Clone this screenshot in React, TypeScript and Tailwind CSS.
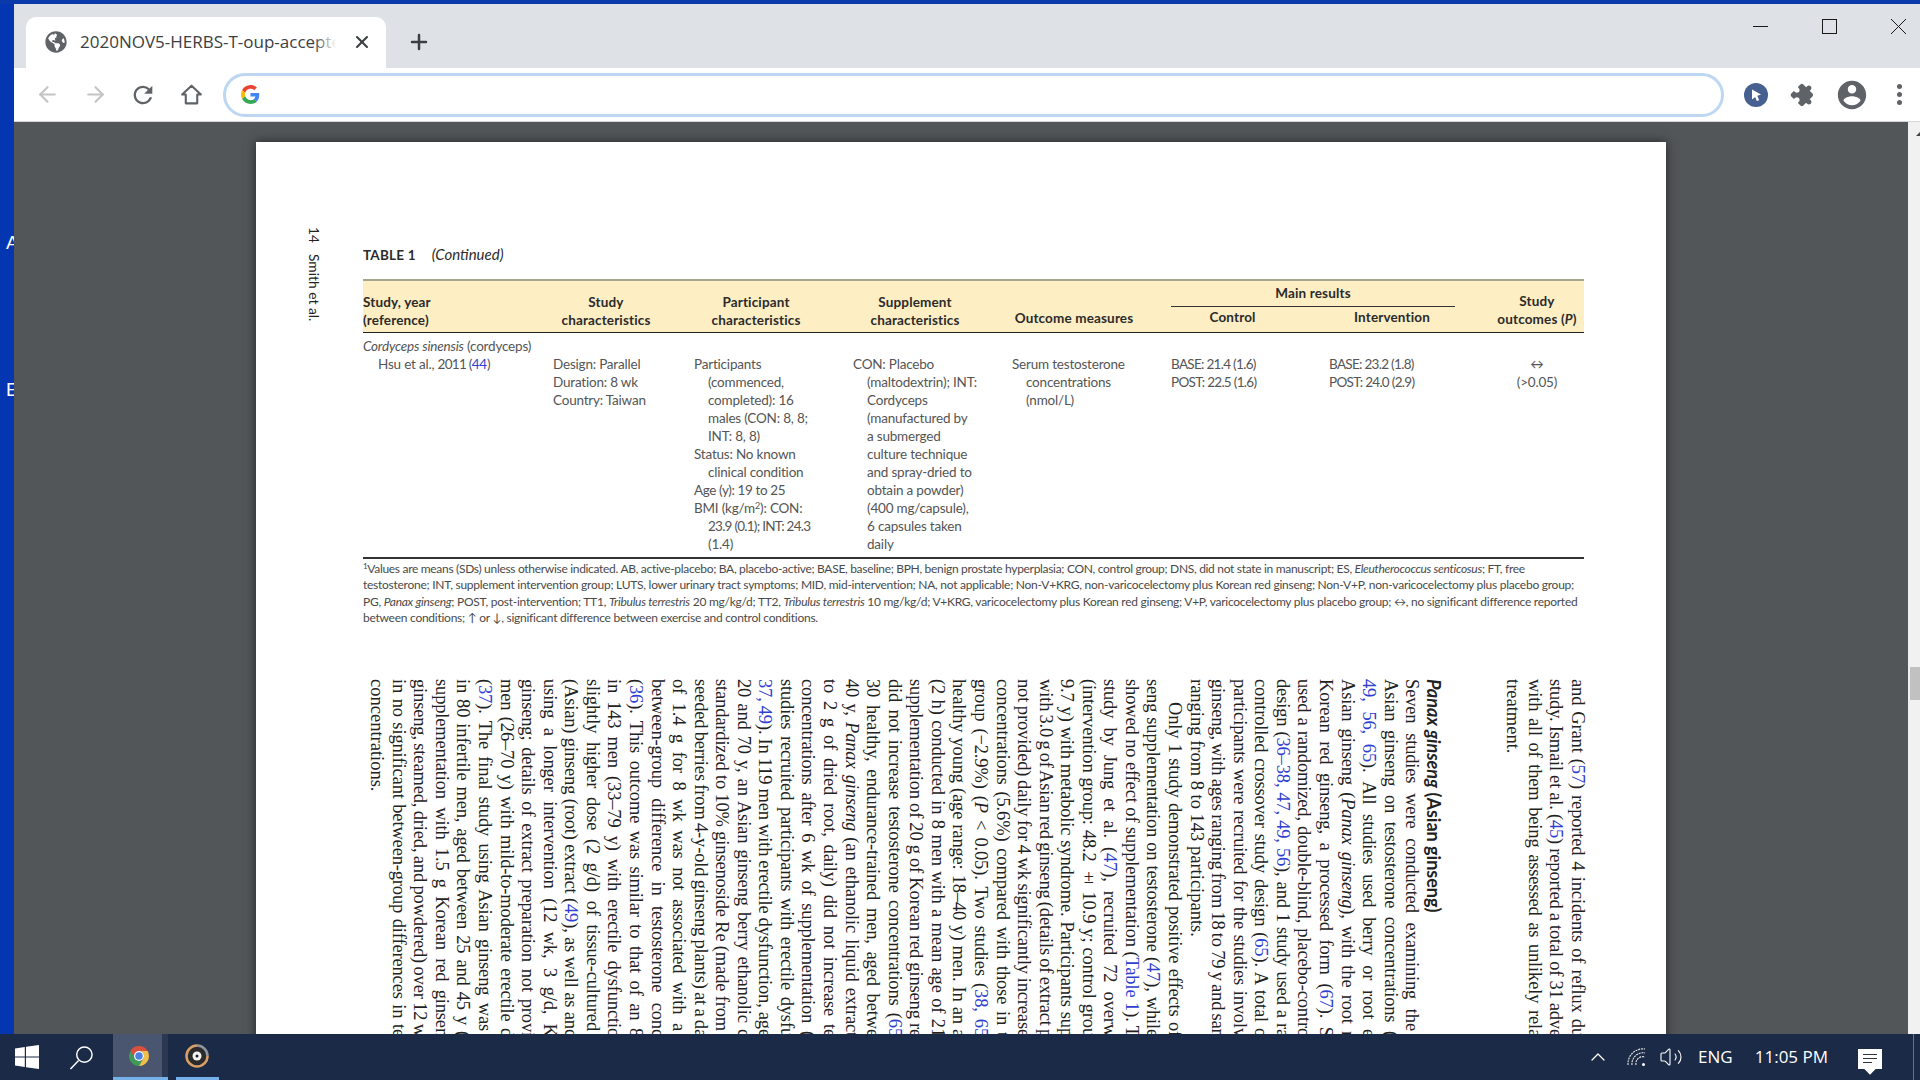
import type { ReactNode } from "react";
import { ArrowLeft, ArrowRight, Plus, X, ChevronUp, Volume2 } from "lucide-react";
import { FaGlobeAmericas } from "react-icons/fa";

function R({ children }: { children: ReactNode }) {
  return <span className="text-[#2f3fd0]">{children}</span>;
}

function I({ children }: { children: ReactNode }) {
  return <span className="italic">{children}</span>;
}

// lines that stop a little short of the fold
function Pad() {
  return <span className="inline-block h-[6px]" />;
}

function GoogleLogo() {
  return (
    <svg viewBox="0 0 48 48" className="h-[19px] w-[19px]">
      <path fill="#EA4335" d="M24 9.5c3.5 0 6.7 1.2 9.2 3.6l6.9-6.9C35.9 2.4 30.4 0 24 0 14.6 0 6.5 5.4 2.6 13.2l8 6.2C12.500 13.700 17.800 9.500 24 9.500z" />
      <path fill="#4285F4" d="M46.100 24.500c0-1.600-.100-3.100-.400-4.500H24v9h12.400c-.500 2.900-2.200 5.400-4.600 7l7.700 6c4.500-4.200 6.600-10.300 6.600-17.500z" />
      <path fill="#FBBC05" d="M10.600 28.600c-.500-1.400-.800-3-.800-4.600s.300-3.200.800-4.600l-8-6.200C.900 16.500 0 20.100 0 24s.900 7.500 2.600 10.800l8-6.200z" />
      <path fill="#34A853" d="M24 48c6.500 0 11.900-2.100 15.900-5.800l-7.700-6c-2.200 1.400-4.900 2.300-8.200 2.300-6.200 0-11.500-4.200-13.400-9.900l-8 6.200C6.500 42.600 14.600 48 24 48z" />
    </svg>
  );
}

function ChromeLogo() {
  return (
    <svg viewBox="0 0 48 48" className="h-[24px] w-[24px]">
      <path fill="#d9503f" d="M24 4A20 20 0 0 1 41.320 14L24 14A10 10 0 0 0 15.340 29L6.680 14A20 20 0 0 1 24 4Z" />
      <path fill="#3f9c58" d="M6.680 14A20 20 0 0 0 24 44L32.660 29A10 10 0 0 1 15.340 29Z" />
      <path fill="#f2c04a" d="M41.320 14A20 20 0 0 1 24 44L32.660 29A10 10 0 0 0 24 14Z" />
      <circle cx="24" cy="24" r="10" fill="#fff" />
      <circle cx="24" cy="24" r="7.500" fill="#4d83e0" />
    </svg>
  );
}

function DiscIcon() {
  return (
    <svg viewBox="0 0 26 26" className="h-[26px] w-[26px]">
      <circle cx="13" cy="13" r="12" fill="#2b2b2b" />
      <path d="M13 2.500A10.500 10.500 0 1 0 23.500 13" fill="none" stroke="#d7a06b" strokeWidth="2.500" />
      <path d="M13 2.500A10.500 10.500 0 0 1 23.500 13" fill="none" stroke="#8f96a3" strokeWidth="2.500" />
      <circle cx="13" cy="13" r="4.500" fill="#f4f4f4" />
      <circle cx="13" cy="13" r="1.500" fill="#222" />
    </svg>
  );
}

function BrowserTabs() {
  return (
    <div className="flex h-[64px] shrink-0 bg-[#dee1e6]">
      <div className="ml-[12px] mt-[13px] flex h-[51px] w-[360px] shrink-0 items-center rounded-t-[10px] bg-white pb-[2px] pl-[19px]">
        <FaGlobeAmericas className="h-[22px] w-[22px] shrink-0 text-[#5f6368]" />
        <div className="relative ml-[13px] w-[262px] overflow-hidden whitespace-nowrap font-['Open_Sans',sans-serif] text-[17px] text-[#3c4043]">
          2020NOV5-HERBS-T-oup-accepted
          <div className="absolute inset-y-0 right-0 w-[28px] bg-gradient-to-r from-transparent to-white to-[80%]" />
        </div>
        <X className="ml-[10px] h-[20px] w-[20px] shrink-0 text-[#3c4043]" strokeWidth={2.500} />
      </div>
      <Plus className="ml-[21px] mt-[26px] h-[24px] w-[24px] shrink-0 text-[#3c4043]" strokeWidth={2.500} />
      <div className="ml-auto flex h-[44px] text-[#1a1a1a]">
        <div className="flex w-[69px] items-center justify-center">
          <div className="h-px w-[15px] bg-[#1a1a1a]" />
        </div>
        <div className="flex w-[69px] items-center justify-center">
          <div className="h-[15px] w-[15px] border border-[#1a1a1a]" />
        </div>
        <div className="flex w-[56px] items-center pl-[27px]">
          <svg viewBox="0 0 15 15" className="h-[15px] w-[15px]">
            <path d="M0 0L15 15M15 0L0 15" stroke="#1a1a1a" strokeWidth="1" />
          </svg>
        </div>
      </div>
    </div>
  );
}

function BrowserToolbar() {
  return (
    <div className="flex h-[53px] shrink-0 items-center bg-white pl-[9px]">
      <div className="flex w-[48px] shrink-0 justify-center">
        <ArrowLeft className="h-[25px] w-[25px] text-[#c2c4c6]" strokeWidth={2} />
      </div>
      <div className="flex w-[48px] shrink-0 justify-center">
        <ArrowRight className="h-[25px] w-[25px] text-[#c2c4c6]" strokeWidth={2} />
      </div>
      <div className="flex w-[48px] shrink-0 justify-center">
        <svg viewBox="0 0 24 24" className="h-[28px] w-[28px] fill-[#5f6368]">
          <path d="M17.650 6.350A7.958 7.958 0 0 0 12 4c-4.420 0-7.990 3.580-7.990 8s3.570 8 7.990 8c3.730 0 6.840-2.550 7.730-6h-2.080A5.990 5.990 0 0 1 12 18c-3.310 0-6-2.690-6-6s2.690-6 6-6c1.660 0 3.140.690 4.220 1.780L13 11h7V4l-2.350 2.350z" />
        </svg>
      </div>
      <div className="flex w-[48px] shrink-0 justify-center">
        <svg viewBox="0 0 24 24" className="h-[25px] w-[25px]">
          <path d="M12 3.500L3 12h3.500v8.500h11V12H21z" fill="none" stroke="#5f6368" strokeWidth="2" strokeLinejoin="round" />
        </svg>
      </div>
      <div className="ml-[8px] flex h-[44px] w-[1501px] shrink-0 items-center rounded-full border-[3px] border-[#bdd7f3] pl-[15px]">
        <GoogleLogo />
      </div>
      <div className="ml-[8px] flex w-[48px] shrink-0 justify-center">
        <div className="flex h-[24px] w-[24px] items-center justify-center rounded-full bg-[#46618f]">
          <svg viewBox="0 0 14 14" className="h-[14px] w-[14px]">
            <path d="M3 1.500L12 6.500L8.300 7.800L10.200 12.300L7.800 13L6.200 9L3 11.500Z" fill="#fff" />
          </svg>
        </div>
      </div>
      <div className="flex w-[48px] shrink-0 justify-center">
        <svg viewBox="0 0 24 24" className="h-[24px] w-[24px] rotate-45 fill-[#5f6368]">
          <path d="M20.500 11H19V7c0-1.100-.900-2-2-2h-4V3.500C13 2.120 11.880 1 10.500 1S8 2.120 8 3.500V5H4c-1.100 0-1.990.900-1.990 2v3.800H3.500c1.490 0 2.700 1.210 2.700 2.700s-1.210 2.700-2.700 2.700H2V20c0 1.100.900 2 2 2h3.800v-1.500c0-1.490 1.210-2.700 2.700-2.700 1.490 0 2.700 1.210 2.700 2.700V22H17c1.100 0 2-.900 2-2v-4h1.500c1.380 0 2.500-1.120 2.500-2.500S21.880 11 20.500 11z" />
        </svg>
      </div>
      <div className="flex w-[47px] shrink-0 justify-center">
        <svg viewBox="0 0 24 24" className="h-[34px] w-[34px] fill-[#5f6368]">
          <path d="M12 2C6.480 2 2 6.480 2 12s4.480 10 10 10 10-4.480 10-10S17.520 2 12 2zm0 3c1.660 0 3 1.340 3 3s-1.340 3-3 3-3-1.340-3-3 1.340-3 3-3zm0 14.200c-2.500 0-4.710-1.280-6-3.220.030-1.990 4-3.080 6-3.080 1.990 0 5.970 1.090 6 3.080-1.290 1.940-3.500 3.220-6 3.220z" />
        </svg>
      </div>
      <div className="flex w-[48px] shrink-0 flex-col items-center gap-[3px]">
        <div className="h-[5px] w-[5px] rounded-full bg-[#5f6368]" />
        <div className="h-[5px] w-[5px] rounded-full bg-[#5f6368]" />
        <div className="h-[5px] w-[5px] rounded-full bg-[#5f6368]" />
      </div>
    </div>
  );
}

const headCell = "row-span-2 self-end pb-[3px] pr-[35px] text-center";

function TableHeader() {
  return (
    <div className="grid h-[51px] grid-cols-[190px_141px_159px_159px_159px_158px_161px_94px] grid-rows-[26px_25px] whitespace-nowrap bg-[#fdeec4] font-bold tracking-[0.15px] text-[#2b2b2b]">
      <div className="row-span-2 self-end pb-[3px]">
        Study, year
        <br />
        (reference)
      </div>
      <div className={headCell}>
        Study
        <br />
        characteristics
      </div>
      <div className={headCell}>
        Participant
        <br />
        characteristics
      </div>
      <div className={headCell}>
        Supplement
        <br />
        characteristics
      </div>
      <div className={headCell + " pb-[5px]"}>Outcome measures</div>
      <div className="col-span-2 mr-[35px] border-b-[1.500px] border-[#333] pt-[3px] text-center">Main results</div>
      <div className="row-span-2 self-end pb-[4px] text-center">
        Study
        <br />
        outcomes (<I>P</I>)
      </div>
      <div className="col-start-6 row-start-2 pr-[35px] pt-[1px] text-center">Control</div>
      <div className="col-start-7 row-start-2 pr-[35px] pt-[1px] text-center">Intervention</div>
    </div>
  );
}

function TableBody() {
  return (
    <div className="pb-[4px] pt-[4px] tracking-[-0.2px] text-[#555]">
      <div>
        <I>Cordyceps sinensis</I> (cordyceps)
      </div>
      <div className="grid grid-cols-[190px_141px_159px_159px_159px_158px_161px_94px] whitespace-nowrap">
        <div className="pl-[15px]">
          Hsu et al., <span className="tracking-[-0.7px]">2011 (</span>
          <R>44</R>)
        </div>
        <div>
          Design: Parallel
          <br />
          Duration: 8 wk
          <br />
          Country: Taiwan
        </div>
        <div>
          <p className="pl-[14px] -indent-[14px]">
            Participants
            <br />
            (commenced,
            <br />
            completed): 16
            <br />
            males (CON: 8, 8;
            <br />
            INT: 8, 8)
          </p>
          <p className="pl-[14px] -indent-[14px]">
            Status: No known
            <br />
            clinical condition
          </p>
          <p className="tracking-[-0.4px]">Age (y): 19 to 25</p>
          <p className="pl-[14px] -indent-[14px]">
            BMI (kg/m<sup className="text-[9px] leading-none">2</sup>): CON:
            <br />
            <span className="tracking-[-0.75px]">23.9 (0.1); INT: 24.3</span>
            <br />
            (1.4)
          </p>
        </div>
        <div className="pl-[14px] -indent-[14px]">
          CON: Placebo
          <br />
          (maltodextrin); INT:
          <br />
          Cordyceps
          <br />
          (manufactured by
          <br />a submerged
          <br />
          culture technique
          <br />
          and spray-dried to
          <br />
          obtain a powder)
          <br />
          (400 mg/capsule),
          <br />6 capsules taken
          <br />
          daily
        </div>
        <div className="pl-[14px] -indent-[14px]">
          Serum testosterone
          <br />
          concentrations
          <br />
          (nmol/L)
        </div>
        <div className="tracking-[-0.7px]">
          BASE: 21.4 (1.6)
          <br />
          POST: 22.5 (1.6)
        </div>
        <div className="tracking-[-0.7px]">
          BASE: 23.2 (1.8)
          <br />
          POST: 24.0 (2.9)
        </div>
        <div className="text-center">
          ↔
          <br />
          (&gt;0.05)
        </div>
      </div>
    </div>
  );
}

function Footnote() {
  return (
    <div className="mt-[2px] whitespace-nowrap text-[12px] leading-[16.300px] tracking-[-0.26px] text-[#4a4a4a]">
      <div className="tracking-[-0.31px]">
        <sup className="text-[8px] leading-none">1</sup>Values are means (SDs) unless otherwise indicated. AB, active-placebo; BA, placebo-active; BASE, baseline; BPH, benign prostate hyperplasia; CON, control group; DNS, did not state in manuscript; ES, <I>Eleutherococcus senticosus</I>; FT, free
      </div>
      <div>
        testosterone; INT, supplement intervention group; LUTS, lower urinary tract symptoms; MID, mid-intervention; NA, not applicable; Non-V+KRG, non-varicocelectomy plus Korean red ginseng; Non-V+P, non-varicocelectomy plus placebo group;
      </div>
      <div>
        PG, <I>Panax ginseng</I>; POST, post-intervention; TT1, <I>Tribulus terrestris</I> 20 mg/kg/d; TT2, <I>Tribulus terrestris</I> 10 mg/kg/d; V+KRG, varicocelectomy plus Korean red ginseng; V+P, varicocelectomy plus placebo group; ↔, no significant difference reported
      </div>
      <div>between conditions; ↑ or ↓, significant difference between exercise and control conditions.</div>
    </div>
  );
}

const introLines: ReactNode[] = [
  <>and Grant (<R>57</R>) reported 4 incidents of reflux du</>,
  <>study. Ismail et al. (<R>45</R>) reported a total of 31 adve</>,
  <>with all of them being assessed as unlikely rela</>,
];

const ginsengLines: ReactNode[] = [
  <>Seven studies were conducted examining the<Pad /></>,
  <>Asian ginseng on testosterone concentrations (</>,
  <><R>49, 56, 65</R>). All studies used berry or root e</>,
  <>Asian ginseng (<I>Panax ginseng</I>), with the root r</>,
  <>Korean red ginseng, a processed form (<R>67</R>). S</>,
  <>used a randomized, double-blind, placebo-contro</>,
  <>design (<R>36–38, 47, 49, 56</R>), and 1 study used a ra</>,
  <>controlled crossover study design (<R>65</R>). A total o</>,
  <>participants were recruited for the studies involv</>,
  <>ginseng, with ages ranging from 18 to 79 y and sam</>,
];

const studyLines: ReactNode[] = [
  <>seng supplementation on testosterone (<R>47</R>), while</>,
  <>showed no effect of supplementation (<R>Table 1</R>). T</>,
  <>study by Jung et al. (<R>47</R>), recruited 72 overw</>,
  <>(intervention group: 48.2 ± 10.9 y; control grou</>,
  <>9.7 y) with metabolic syndrome. Participants sup</>,
  <>with 3.0 g of Asian red ginseng (details of extract p</>,
  <>not provided) daily for 4 wk significantly increase</>,
  <>concentrations (5.6%) compared with those in t</>,
  <>group (−2.9%) (<I>P</I> &lt; 0.05). Two studies (<R>38, 65</R></>,
  <>healthy young (age range: 18–40 y) men. In an a</>,
  <>(2 h) conducted in 8 men with a mean age of 21</>,
  <>supplementation of 20 g of Korean red ginseng re</>,
  <>did not increase testosterone concentrations (<R>65</R></>,
  <>30 healthy, endurance-trained men, aged betwe</>,
  <>40 y, <I>Panax ginseng</I> (an ethanolic liquid extract</>,
  <>to 2 g of dried root, daily) did not increase te</>,
  <>concentrations after 6 wk of supplementation (</>,
  <>studies recruited participants with erectile dysfu</>,
  <><R>37, 49</R>). In 119 men with erectile dysfunction, age</>,
  <>20 and 70 y, an Asian ginseng berry ethanolic c</>,
  <>standardized to 10% ginsenoside Re (made from<Pad /></>,
  <>seeded berries from 4-y-old ginseng plants) at a da</>,
  <>of 1.4 g for 8 wk was not associated with a<Pad /></>,
  <>between-group difference in testosterone conc</>,
  <>(<R>36</R>). This outcome was similar to that of an 8</>,
  <>in 143 men (33–79 y) with erectile dysfunctio</>,
  <>slightly higher dose (2 g/d) of tissue-cultured<Pad /></>,
  <>(Asian) ginseng (root) extract (<R>49</R>), as well as anc</>,
  <>using a longer intervention (12 wk, 3 g/d, K</>,
  <>ginseng; details of extract preparation not provi</>,
  <>men (26–70 y) with mild-to-moderate erectile d</>,
  <>(<R>37</R>). The final study using Asian ginseng was<Pad /></>,
  <>in 80 infertile men, aged between 25 and 45 y (</>,
  <>supplementation with 1.5 g Korean red ginsen</>,
  <>ginseng, steamed, dried, and powdered) over 12 w</>,
  <>in no significant between-group differences in te</>,
];

function Line({ children }: { children: ReactNode }) {
  return <div className="h-[358px] overflow-hidden tracking-[-0.16px] [text-align-last:justify] [word-spacing:-1.200px]">{children}</div>;
}

function RotatedBody() {
  return (
    <div className="ml-[107px] mt-[53px] h-[400px] w-[1225px] whitespace-nowrap font-['Liberation_Serif',serif] text-[18.500px] leading-[21.560px] text-[#222] [writing-mode:vertical-rl]">
      {introLines.map((l, i) => (
        <Line key={i}>{l}</Line>
      ))}
      <div>treatment.</div>
      <div className="mr-[58px] font-['Lato',sans-serif] text-[18px] font-bold text-[#222]">
        <I>Panax ginseng</I> (Asian ginseng)
      </div>
      {ginsengLines.map((l, i) => (
        <Line key={i}>{l}</Line>
      ))}
      <div>ranging from 8 to 143 participants.</div>
      <div className="h-[358px] overflow-hidden pt-[23px] tracking-[-0.16px] [text-align-last:justify] [word-spacing:-1.200px]">Only 1 study demonstrated positive effects of</div>
      {studyLines.map((l, i) => (
        <Line key={i}>{l}</Line>
      ))}
      <div>concentrations.</div>
    </div>
  );
}

function PdfPage() {
  return (
    <div className="ml-[242px] mt-[20px] h-[960px] w-[1410px] shrink-0 bg-white shadow-[0_0_10px_rgba(0,0,0,0.55)]">
      <div className="flex pl-[53px] pt-[85px] font-['Lato',sans-serif] text-[13.500px] leading-[18px]">
        <div className="w-[14px] shrink-0 whitespace-nowrap text-[13.800px] text-[#222] [writing-mode:vertical-rl]">
          14<span className="inline-block h-[11px]" />Smith et al.
        </div>
        <div className="ml-[40px] w-[1221px] shrink-0">
          <div className="mb-[15px] mt-[18px] text-[#2b2b2b]">
            <span className="font-bold tracking-[0.2px]">TABLE 1</span>
            <span className="ml-[16px] text-[15px] italic">(Continued)</span>
          </div>
          <div className="border-t-2 border-[#a5a690]" />
          <TableHeader />
          <div className="border-t-[1.500px] border-[#222]" />
          <TableBody />
          <div className="border-t-2 border-[#333]" />
          <Footnote />
        </div>
      </div>
      <RotatedBody />
    </div>
  );
}

function PdfViewer() {
  return (
    <div className="flex min-h-0 flex-1 overflow-hidden bg-[#525659]">
      <PdfPage />
      <div className="ml-auto flex w-[12px] shrink-0 flex-col bg-[#f1f1f1] pl-[2px]">
        <div className="ml-[6px] mt-[9px] h-0 w-0 border-b-[5px] border-l-[5px] border-b-[#444] border-l-transparent" />
        <div className="mt-[531px] h-[33px] w-[10px] shrink-0 bg-[#c1c1c1]" />
      </div>
    </div>
  );
}

function Taskbar() {
  return (
    <div className="flex h-[46px] shrink-0 items-center bg-[#1b2a47] font-['Open_Sans',sans-serif] text-white">
      <div className="flex h-full w-[54px] shrink-0 items-center justify-center">
        <svg viewBox="0 0 24 24" className="h-[24px] w-[24px] fill-white">
          <path d="M0 3.400L9.800 2v9.500H0zM11 1.800L24 0v11.500H11zM0 12.500h9.800V22L0 20.600zM11 12.500h13V24l-13-1.800z" />
        </svg>
      </div>
      <div className="flex h-full w-[59px] shrink-0 items-center justify-center pr-[4px]">
        <svg viewBox="0 0 26 26" className="h-[25px] w-[25px]" fill="none" stroke="#fff" strokeWidth="1.500">
          <circle cx="16" cy="10" r="8" />
          <path d="M10 16L1.500 25" />
        </svg>
      </div>
      <div className="flex h-full w-[55px] shrink-0 flex-col bg-gradient-to-r from-[#4a5670] from-[89%] to-[#2c3851] to-[89%]">
        <div className="flex flex-1 items-center justify-center pr-[4px]">
          <ChromeLogo />
        </div>
        <div className="h-[3px] bg-[#76b0e8]" />
      </div>
      <div className="ml-[8px] flex h-full w-[43px] shrink-0 flex-col">
        <div className="flex flex-1 items-center justify-center pr-[2px]">
          <DiscIcon />
        </div>
        <div className="h-[3px] bg-[#76b0e8]" />
      </div>
      <div className="ml-auto flex items-center">
        <ChevronUp className="h-[24px] w-[24px] text-white" strokeWidth={1.300} />
        <svg viewBox="0 0 20 20" className="ml-[17px] h-[20px] w-[20px]" fill="none" stroke="#e6e6e6" strokeWidth="1.100">
          <path d="M1 18A15 15 0 0 1 18 2" strokeDasharray="2 0.800" />
          <path d="M5 18A11 11 0 0 1 18 6" strokeDasharray="2 0.800" />
          <path d="M9 18A7 7 0 0 1 18 10" strokeDasharray="2 0.800" />
          <circle cx="16.500" cy="17.500" r="1.500" fill="#fff" stroke="none" />
        </svg>
        <Volume2 className="ml-[12px] h-[24px] w-[24px] text-white" strokeWidth={1.100} />
        <span className="ml-[15px] text-[17px]">ENG</span>
        <span className="ml-[22px] text-[17px]">11:05 PM</span>
        <div className="relative ml-[30px] mt-[3px] flex h-[20px] w-[24px] flex-col gap-[3px] bg-white px-[5px] pt-[5px]">
          <div className="h-px bg-[#333]" />
          <div className="h-px bg-[#333]" />
          <div className="h-px w-[9px] bg-[#333]" />
          <div className="absolute -bottom-[4px] left-[8px] h-[8px] w-[8px] rotate-45 bg-white" />
        </div>
        <div className="ml-[31px] h-[46px] w-px bg-[#6a7384]" />
        <div className="w-[6px]" />
      </div>
    </div>
  );
}

export default function App() {
  return (
    <div className="flex h-[1080px] w-[1920px] flex-col overflow-hidden bg-[#0a3aaa]">
      <div className="h-[4px] shrink-0 bg-[#0a3aaa]" />
      <div className="flex min-h-0 flex-1">
        <div className="w-[14px] shrink-0 overflow-hidden bg-[#0336b0] pl-[6px] pt-[228px] font-['Liberation_Sans',sans-serif] text-[19px] leading-[22px] text-white">
          <div>A</div>
          <div className="mt-[125px]">E</div>
        </div>
        <div className="flex min-w-0 flex-1 flex-col">
          <BrowserTabs />
          <BrowserToolbar />
          <div className="h-px shrink-0 bg-[#d5d7da]" />
          <PdfViewer />
        </div>
      </div>
      <Taskbar />
    </div>
  );
}
